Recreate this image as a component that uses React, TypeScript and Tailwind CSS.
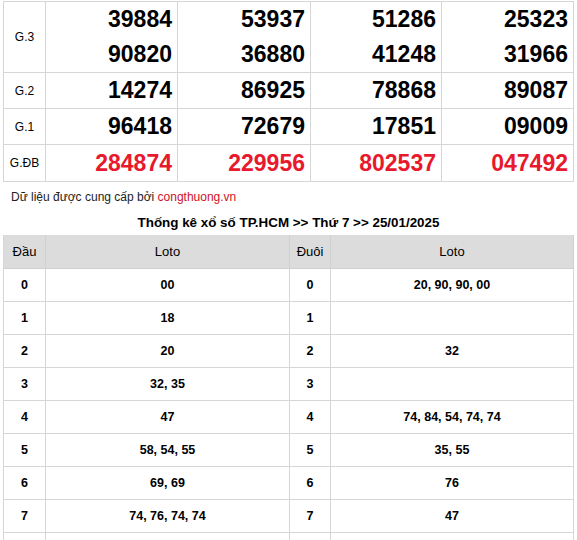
import React from 'react';

const prizes: { label: string; nums: string[][]; red?: boolean }[] = [
  { label: 'G.3', nums: [['39884', '90820'], ['53937', '36880'], ['51286', '41248'], ['25323', '31966']] },
  { label: 'G.2', nums: [['14274'], ['86925'], ['78868'], ['89087']] },
  { label: 'G.1', nums: [['96418'], ['72679'], ['17851'], ['09009']] },
  { label: 'G.ĐB', nums: [['284874'], ['229956'], ['802537'], ['047492']], red: true },
];

const heights: Record<string, string> = {
  'G.3': 'h-[71px]',
  'G.2': 'h-[36px]',
  'G.1': 'h-[36px]',
  'G.ĐB': 'h-[37px]',
};

const colWidths = ['w-[132px]', 'w-[133px]', 'w-[131px]', 'w-[132px]'];

const loto: { n: string; dau: string; duoi: string }[] = [
  { n: '0', dau: '00', duoi: '20, 90, 90, 00' },
  { n: '1', dau: '18', duoi: '' },
  { n: '2', dau: '20', duoi: '32' },
  { n: '3', dau: '32, 35', duoi: '' },
  { n: '4', dau: '47', duoi: '74, 84, 54, 74, 74' },
  { n: '5', dau: '58, 54, 55', duoi: '35, 55' },
  { n: '6', dau: '69, 69', duoi: '76' },
  { n: '7', dau: '74, 76, 74, 74', duoi: '47' },
];

export default function App() {
  return (
    <div className="w-[577px] h-[540px] overflow-hidden bg-white text-black" style={{ fontFamily: '"Liberation Sans", Arial, sans-serif' }}>
      {/* ket qua */}
      <div className="mt-[1px] ml-[3px] w-[571px] border-l border-t border-[#d6d6d6]">
        {prizes.map((p) => (
          <div key={p.label} className={`flex border-b border-[#d6d6d6] ${heights[p.label]}`}>
            <div className="w-[42px] border-r border-[#d6d6d6] flex items-center justify-center text-[12px]">
              {p.label}
            </div>
            {p.nums.map((col, i) => (
              <div
                key={i}
                className={`${colWidths[i]} border-r border-[#d6d6d6] flex flex-col justify-around items-end pr-[5px] text-[23px] font-bold ${p.red ? 'text-[#e8192c]' : 'text-black'}`}
              >
                {col.map((n) => (
                  <span key={n} className="leading-[35px]">{n}</span>
                ))}
              </div>
            ))}
          </div>
        ))}
      </div>

      <div className="h-[30px] flex items-center px-[11px] text-[12px] text-[#222]">
        Dữ liệu được cung cấp bởi&nbsp;<span className="text-[#d0121f]">congthuong.vn</span>
      </div>

      <div className="h-[23px] flex items-center justify-center text-[13.4px] font-bold">
        Thống kê xổ số TP.HCM &gt;&gt; Thứ 7 &gt;&gt; 25/01/2025
      </div>

      {/* loto */}
      <div className="ml-[3px] w-[571px] border-l border-[#d6d6d6]">
        <div className="flex h-[34px] bg-[#dcdcdc] border-b border-[#d0d0d0] text-[13px]">
          <div className="w-[42px] border-r border-[#d0d0d0] flex items-center justify-center">Đầu</div>
          <div className="w-[244px] border-r border-[#d0d0d0] flex items-center justify-center">Loto</div>
          <div className="w-[41px] border-r border-[#d0d0d0] flex items-center justify-center">Đuôi</div>
          <div className="w-[243px] border-r border-[#d0d0d0] flex items-center justify-center">Loto</div>
        </div>
        {loto.map((r) => (
          <div key={r.n} className="flex h-[33px] border-b border-[#d6d6d6] text-[12.5px] font-bold">
            <div className="w-[42px] border-r border-[#d6d6d6] flex items-center justify-center">{r.n}</div>
            <div className="w-[244px] border-r border-[#d6d6d6] flex items-center justify-center">{r.dau}</div>
            <div className="w-[41px] border-r border-[#d6d6d6] flex items-center justify-center">{r.n}</div>
            <div className="w-[243px] border-r border-[#d6d6d6] flex items-center justify-center">{r.duoi}</div>
          </div>
        ))}
        <div className="flex h-[33px]">
          <div className="w-[42px] border-r border-[#d6d6d6]" />
          <div className="w-[244px] border-r border-[#d6d6d6]" />
          <div className="w-[41px] border-r border-[#d6d6d6]" />
          <div className="w-[243px] border-r border-[#d6d6d6]" />
        </div>
      </div>
    </div>
  );
}
